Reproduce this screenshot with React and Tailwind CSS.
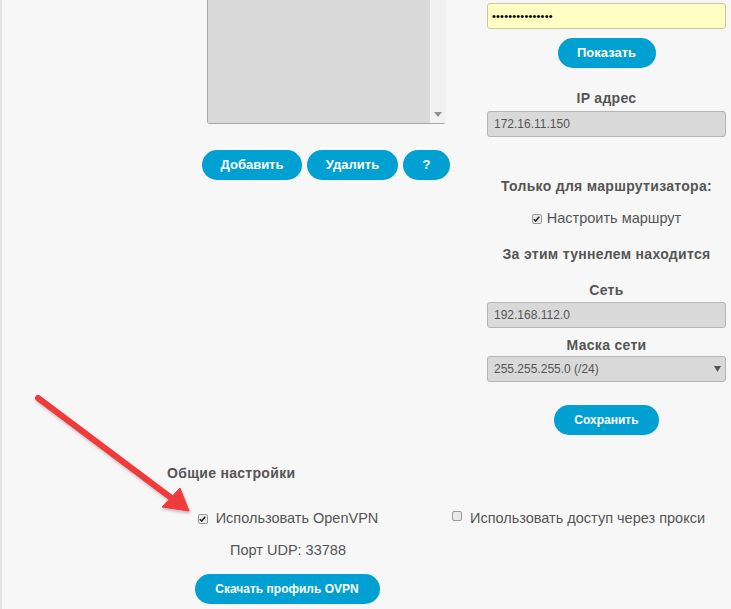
export default function App() {
  const btn = 'h-[30px] rounded-full bg-[#00a0d2] text-white font-bold flex items-center justify-center'
  const head = 'text-[14px] font-bold text-[#555] text-center tracking-[0.3px]'
  const field = 'h-[26px] w-full rounded-[3px] border border-[#b5b5b5] bg-[#d9d9d9] px-[6px] text-[12px] text-[#555] flex items-center'

  return (
    <div
      className="relative w-[731px] h-[609px] overflow-hidden bg-[#f7f7f7] border-l-2 border-[#e3e3e3]"
      style={{ fontFamily: '"Liberation Sans", Arial, sans-serif' }}
    >
      {/* top area: list on the left, tunnel form on the right */}
      <div className="flex">
        <div className="w-[485px] pl-[200px]">
          {/* listbox — top is cut off by the screenshot */}
          <div className="ml-[5px] w-[239px] h-[124px] flex rounded-b-[3px] border-l border-b border-[#a9a9a9]">
            <div className="flex-1 bg-[#d9d9d9]" />
            <div className="w-[16px] bg-[#f1f1f1] flex items-end justify-center pb-[6px]">
              <svg width="8" height="5" viewBox="0 0 8 5"><path d="M0 0h8L4 5z" fill="#8f8f8f" /></svg>
            </div>
          </div>
          <div className="mt-[26px] flex gap-[5px] text-[13px]">
            <div className={btn + ' w-[100px]'}>Добавить</div>
            <div className={btn + ' w-[91px]'}>Удалить</div>
            <div className={btn + ' w-[47px]'}>?</div>
          </div>
        </div>

        <div className="w-[239px] pt-[3px] flex flex-col items-center">
          <div className="h-[26px] w-full rounded-[3px] border border-[#c9c99a] bg-[#ffffc4] px-[4px] flex items-center text-[11px] tracking-[0.2px] text-black leading-none">
            •••••••••••••••
          </div>
          <div className={btn + ' mt-[9px] w-[98px] text-[13px]'}>Показать</div>
          <div className={head + ' mt-[22px] leading-[16px]'}>IP адрес</div>
          <div className={field + ' mt-[5px]'}>172.16.11.150</div>
          <div className={head + ' mt-[41px] leading-[16px]'}>Только для маршрутизатора:</div>
          <div className="mt-[16px] flex items-center gap-[5px] text-[14.5px] text-[#555] leading-[16px]">
            <Check on />
            <span>Настроить маршрут</span>
          </div>
          <div className={head + ' mt-[20px] leading-[16px]'}>За этим туннелем находится</div>
          <div className={head + ' mt-[20px] leading-[16px]'}>Сеть</div>
          <div className={field + ' mt-[4px]'}>192.168.112.0</div>
          <div className={head + ' mt-[9px] leading-[16px]'}>Маска сети</div>
          <div className={field + ' mt-[3px] h-[24px] justify-between pr-[4px]'}>
            <span>255.255.255.0 (/24)</span>
            <svg width="7" height="6" viewBox="0 0 7 6"><path d="M0 0h7L3.5 6z" fill="#555" /></svg>
          </div>
          <div className={btn + ' mt-[23px] w-[105px] text-[12px]'}>Сохранить</div>
        </div>
      </div>

      {/* general settings */}
      <div className="mt-[30px] pl-[165px]">
        <div className="text-[14px] font-bold text-[#555] leading-[16px] tracking-[0.3px]">Общие настройки</div>
        <div className="mt-[29px] flex text-[14.5px] text-[#555] leading-[16px]">
          <div className="w-[240px] flex flex-col items-center">
            <div className="flex items-center gap-[8px] ml-[2px]">
              <Check on />
              <span>Использовать OpenVPN</span>
            </div>
            <div className="mt-[16px] ml-[2px] text-[14.5px]">Порт UDP: 33788</div>
            <div className={btn + ' mt-[16px] w-[185px] text-[12px]'}>Скачать профиль OVPN</div>
          </div>
          <div className="ml-[45px] flex items-start gap-[8px]">
            <Check />
            <span>Использовать доступ через прокси</span>
          </div>
        </div>
      </div>

      {/* red annotation arrow */}
      <svg className="absolute left-0 top-0 pointer-events-none" width="731" height="609">
        <defs>
          <filter id="sh" x="-20%" y="-20%" width="140%" height="140%">
            <feDropShadow dx="1" dy="2" stdDeviation="1.5" floodColor="#000" floodOpacity="0.25" />
          </filter>
        </defs>
        <g filter="url(#sh)" fill="#f03a3c" stroke="#f03a3c">
          <line x1="36" y1="398" x2="168" y2="497" strokeWidth="6" strokeLinecap="round" />
          <path d="M187 511 L160 507 L178 488 Z" strokeWidth="1" strokeLinejoin="round" />
        </g>
      </svg>
    </div>
  )
}

function Check({ on }) {
  return (
    <span className="w-[10px] h-[10px] rounded-[2px] border border-[#9a9a9a] bg-[#e9e9e9] flex items-center justify-center shrink-0 mt-[1px]">
      {on && (
        <svg width="7" height="6" viewBox="0 0 7 6"><path d="M0.8 3.2 L2.7 5 L6.2 0.8" fill="none" stroke="#222" strokeWidth="1.5" /></svg>
      )}
    </span>
  )
}
